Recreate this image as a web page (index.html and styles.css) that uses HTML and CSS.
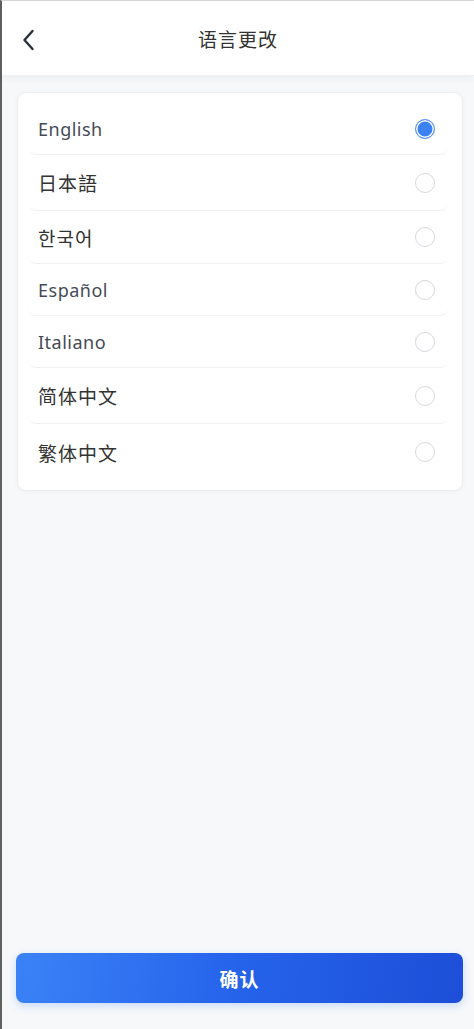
FILE: index.html
```html
<!DOCTYPE html>
<html lang="zh-CN">
<head>
<meta charset="utf-8">
<title>语言更改</title>
<link rel="stylesheet" href="styles.css">
</head>
<body>
<div class="page">
  <header class="header">
    <button class="back" aria-label="返回">
      <svg width="14" height="22" viewBox="0 0 14 22"><path d="M10.5 2 L2.5 11 L10.5 20" fill="none" stroke="#2b2f3a" stroke-width="2.4" stroke-linecap="round" stroke-linejoin="round"/></svg>
    </button>
    <h1 class="title">语言更改</h1>
  </header>
  <main class="content">
    <ul class="card">
      <li class="row"><span class="label">English</span><span class="radio radio-on"></span></li>
      <li class="row cjk"><span class="label">日本語</span><span class="radio"></span></li>
      <li class="row cjk-kr"><span class="label">한국어</span><span class="radio"></span></li>
      <li class="row"><span class="label">Español</span><span class="radio"></span></li>
      <li class="row"><span class="label">Italiano</span><span class="radio"></span></li>
      <li class="row cjk"><span class="label">简体中文</span><span class="radio"></span></li>
      <li class="row cjk last"><span class="label">繁体中文</span><span class="radio"></span></li>
    </ul>
  </main>
  <footer class="footer">
    <button class="confirm">确认</button>
  </footer>
</div>
</body>
</html>
```
FILE: styles.css
```css
* { box-sizing: border-box; }
html, body { margin: 0; padding: 0; height: 100%; }
body {
  background: #f7f8fa;
  font-family: "Noto Sans", "Noto Sans CJK SC", sans-serif;
  color: #333;
}
.page {
  height: 1029px;
  display: flex;
  flex-direction: column;
  border-left: 2px solid #5f6160;
  border-top: 1px solid #d9d9d9;
}
.header {
  height: 75px;
  background: #fff;
  display: flex;
  align-items: center;
  justify-content: center;
  position: relative;
  box-shadow: 0 2px 8px rgba(0,0,0,0.05);
  border-bottom: 1px solid #eef0f3;
}
.back {
  position: absolute;
  left: 19px;
  top: 27px;
  background: none;
  border: 0;
  padding: 0;
  width: 16px;
  height: 24px;
  display: flex;
  align-items: center;
  justify-content: center;
}
.title {
  margin: 0;
  font-size: 19px;
  font-weight: 400;
  letter-spacing: 1px;
  color: #333;
  font-family: "Noto Sans CJK SC", sans-serif;
}
.content {
  flex: 1;
  padding: 16px 11px 0 15px;
}
.card {
  list-style: none;
  margin: 0;
  padding: 10px 14px 10px 10px;
  background: #fff;
  border-radius: 9px;
  border: 1px solid #eceef2;
  box-shadow: 0 1px 4px rgba(0,0,0,0.04);
}
.row {
  display: flex;
  align-items: center;
  justify-content: space-between;
  height: 52px;
  padding: 0 13px 0 10px;
  border-bottom: 1px solid #f0f1f3;
  border-radius: 0 0 8px 8px;
}
.row.cjk { height: 56px; }
.row.cjk-kr { height: 53px; }
.row.last { border-bottom: 0; }
.label {
  font-size: 18px;
  color: #454a56;
  letter-spacing: 0.5px;
}
.cjk .label, .cjk-kr .label {
  font-family: "Noto Sans CJK SC", "Noto Sans CJK KR", sans-serif;
  font-size: 19px;
  color: #333;
  letter-spacing: 1px;
}
.cjk-kr .label { font-family: "Noto Sans CJK KR", sans-serif; }
.radio {
  width: 20px;
  height: 20px;
  border-radius: 50%;
  border: 1.5px solid #d7d9de;
  background: #fff;
  flex: none;
}
.radio-on {
  border: 1.5px solid #5b95f7;
  background: #3b82f6;
  box-shadow: inset 0 0 0 1.5px #fff;
}
.footer {
  padding: 0 11px 26px 14px;
}
.confirm {
  width: 100%;
  height: 50px;
  border: 0;
  border-radius: 8px;
  background: linear-gradient(100deg, #3b82f6 0%, #2563eb 50%, #1d4ed8 100%);
  box-shadow: 0 3px 8px rgba(59,130,246,0.25);
  color: #fff;
  font-family: "Noto Sans CJK SC", sans-serif;
  font-weight: 700;
  font-size: 19px;
  letter-spacing: 1px;
}
```
